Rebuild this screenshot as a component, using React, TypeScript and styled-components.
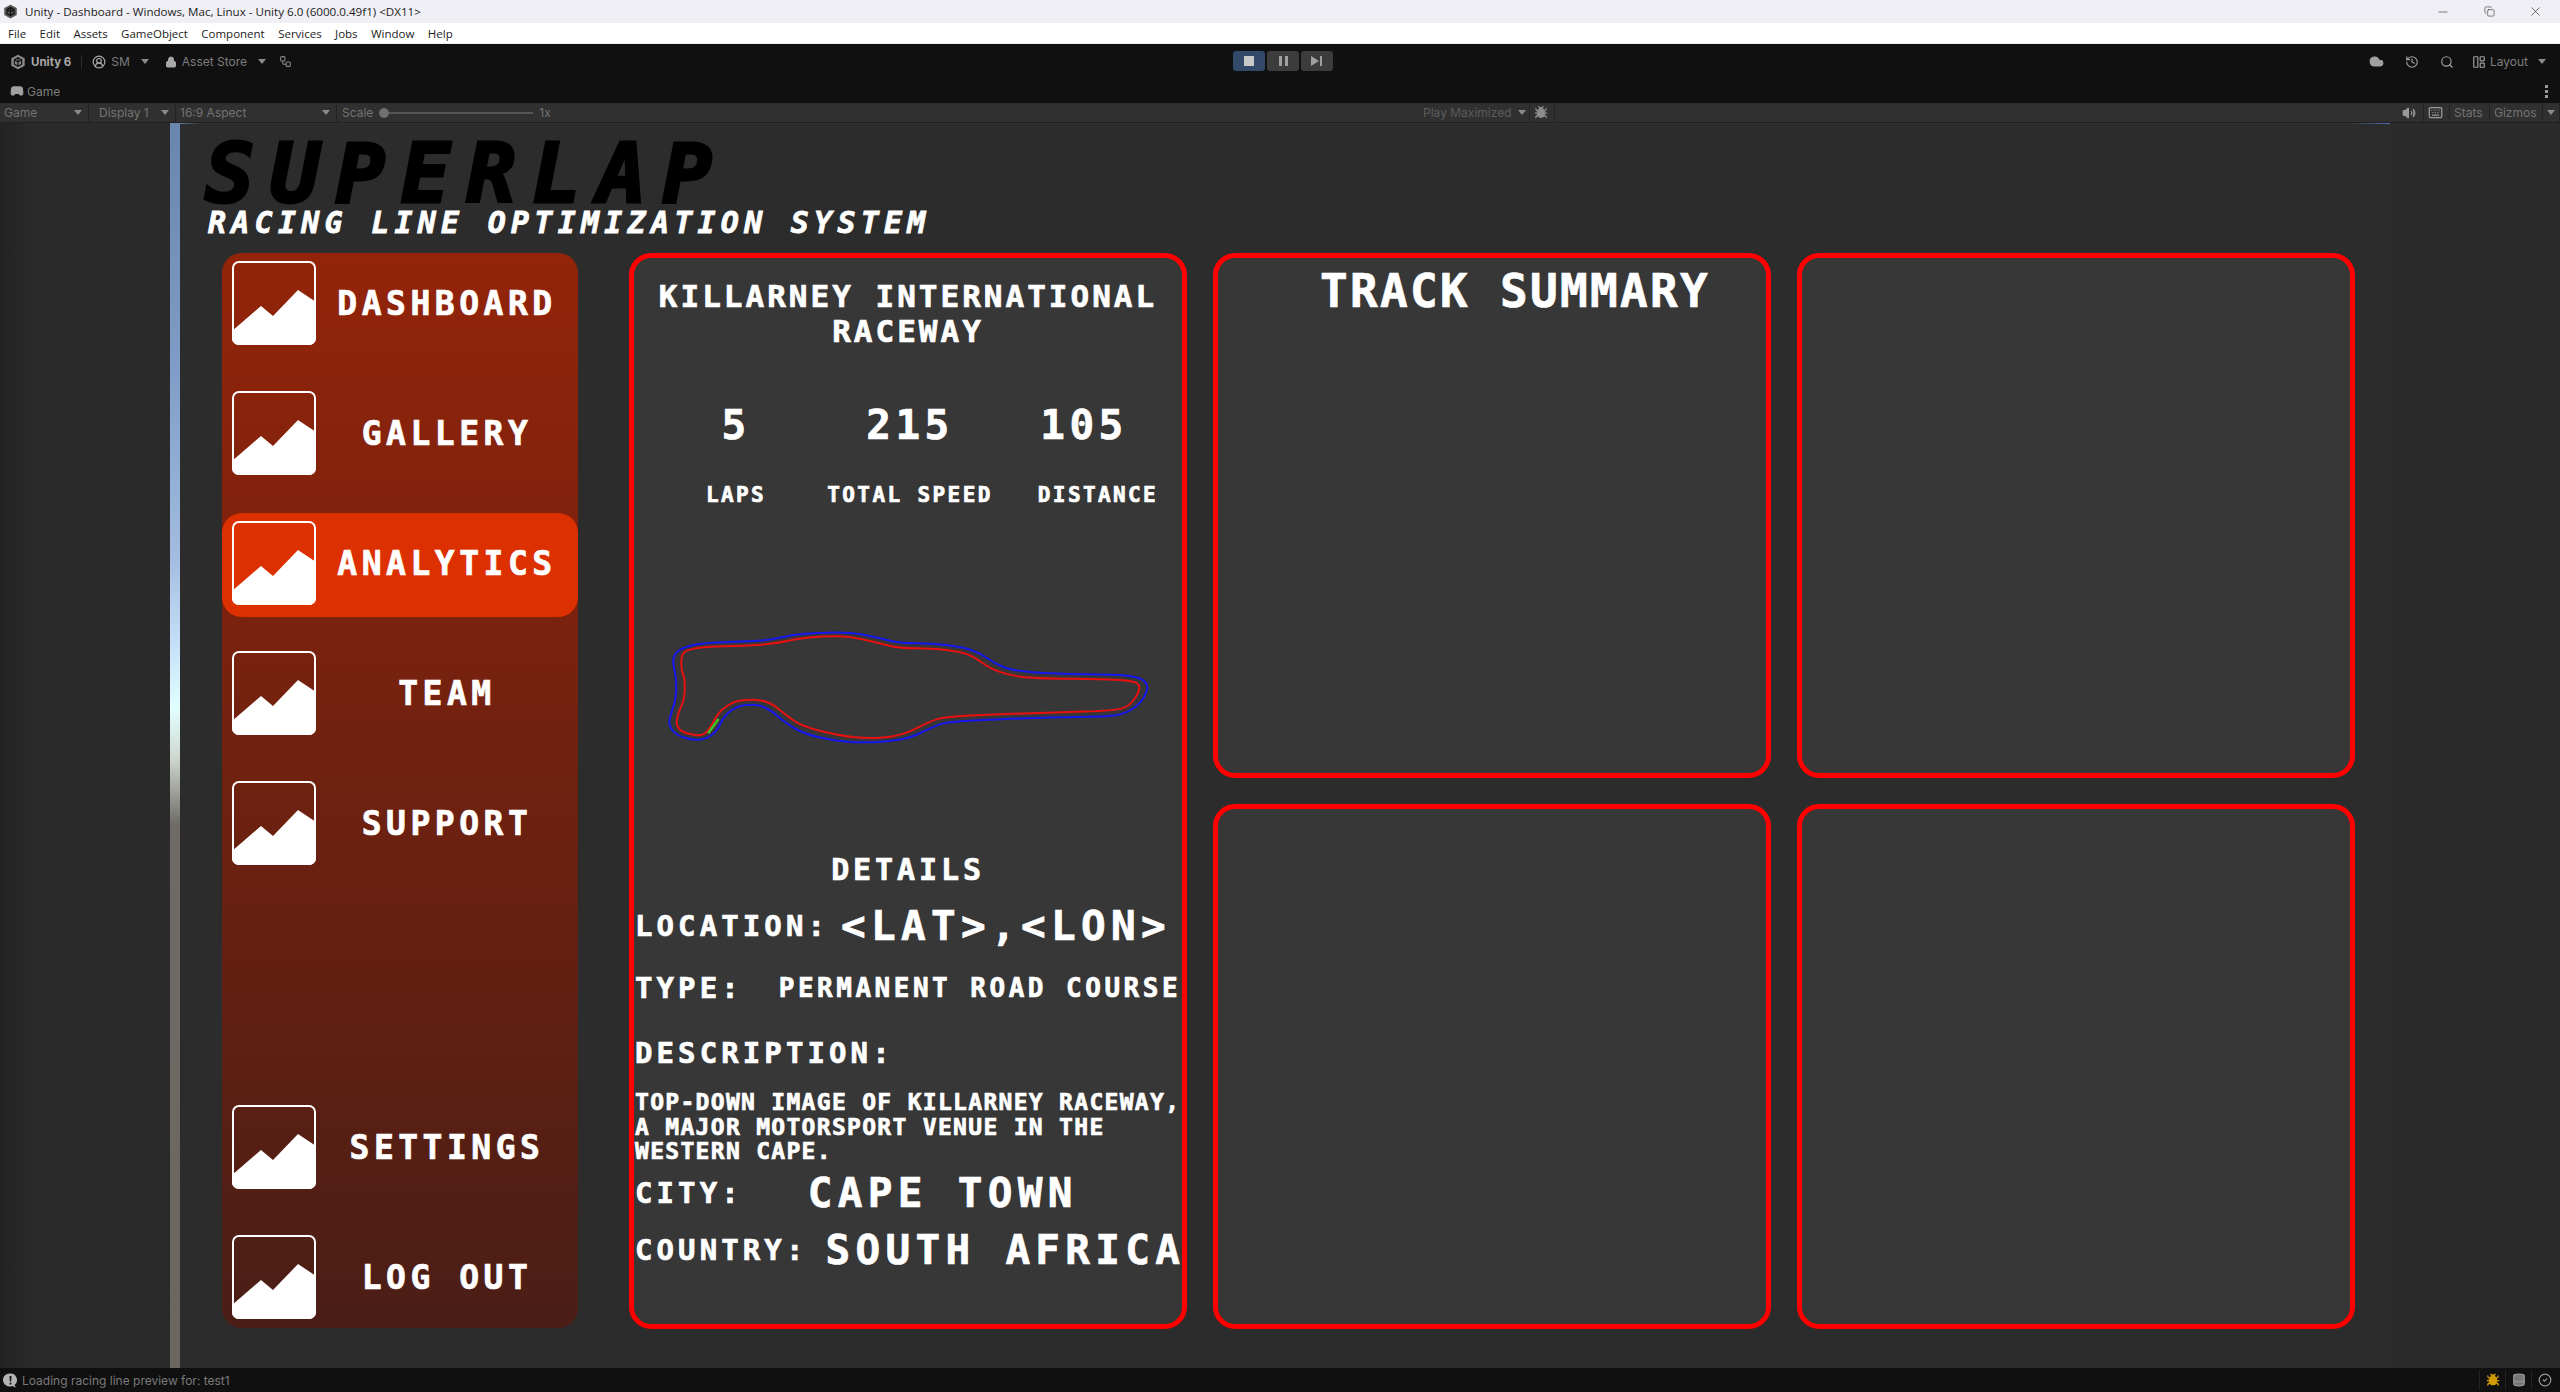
import React from "react";
import styled, { createGlobalStyle } from "styled-components";
import { Bug, CircleCheck, Cloud, Database, Gamepad2, History, Keyboard, LayoutPanelLeft, Lock, Search, UserCircle2, Volume2, Workflow, Minus, Copy, X } from "lucide-react";

const Global = createGlobalStyle`
  html, body { margin: 0; padding: 0; height: 100%; background: #2b2b2b; overflow: hidden; }
  #root { height: 100%; }
  * { box-sizing: border-box; }
`;

const Shell = styled.div`
  width: 2560px;
  height: 1392px;
  display: flex;
  flex-direction: column;
  font-family: Inter, "Liberation Sans", sans-serif;
  font-size: 12px;
  color: #7d7d7d;
`;

const TitleBar = styled.div`
  height: 23px;
  background: #f0eff5;
  display: flex;
  align-items: center;
  padding: 0 2px 0 3px;
  gap: 7px;
  color: #1c1c1c;
  font-family: "Open Sans", sans-serif;
  font-size: 11.6px;
`;
const TitleText = styled.span`flex: 1; white-space: nowrap;`;
const WindowButtons = styled.div`
  display: flex;
  width: 138px;
  height: 23px;
  align-items: center;
  color: #222;
`;
const WindowButton = styled.span`
  width: 46px;
  display: flex;
  justify-content: center;
`;
const MenuBar = styled.div`
  height: 20px;
  background: #fff;
  display: flex;
  align-items: center;
  padding-left: 8px;
  gap: 13.4px;
  color: #1c1c1c;
  font-family: "Open Sans", sans-serif;
  font-size: 11.5px;
`;

const TopZone = styled.div`
  height: 60px;
  background: #101010;
  display: flex;
  flex-direction: column;
  border-top: 1px solid #eee;
`;
const TopRow = styled.div`
  height: 35px;
  display: flex;
  align-items: center;
  position: relative;
  padding: 0 14px 0 10px;
`;
const TopGroup = styled.div<{ $gap?: number; $left?: number }>`
  display: flex;
  align-items: center;
  gap: ${(p) => p.$gap ?? 5}px;
  margin-left: ${(p) => p.$left ?? 0}px;
`;
const TopSpacer = styled.div`flex: 1;`;
const UnityName = styled.span`
  color: #a8a8a8;
  font-weight: 700;
  font-size: 11.5px;
`;
const Divider = styled.span`
  width: 1px;
  height: 14px;
  background: #2c2c2c;
  margin: 0 5px;
`;
const Gap = styled.span<{ $w: number }>`
  width: ${(p) => p.$w}px;
`;
const Caret = styled.span<{ $left?: number }>`
  width: 0;
  height: 0;
  border-left: 4px solid transparent;
  border-right: 4px solid transparent;
  border-top: 5px solid #8a8a8a;
  margin-left: ${(p) => p.$left ?? 6}px;
`;
const PlayBar = styled.div`
  position: absolute;
  left: 1233px;
  top: 7px;
  display: flex;
  gap: 2px;
`;
const PlayButton = styled.div<{ $on?: boolean }>`
  width: 32px;
  height: 20px;
  border-radius: 3px;
  background: ${(p) => (p.$on ? "#33496a" : "#3c3c3c")};
  display: flex;
  align-items: center;
  justify-content: center;
  gap: 3px;
`;
const StopGlyph = styled.span`width: 10px; height: 10px; background: #c8c8c8;`;
const PauseGlyph = styled.span`width: 3px; height: 10px; background: #a0a0a0;`;
const TabRow = styled.div`
  height: 24px;
  display: flex;
  align-items: center;
  justify-content: space-between;
  padding: 0 12px 0 10px;
`;
const Tab = styled.div`
  display: flex;
  align-items: center;
  gap: 3px;
  color: #7e7e7e;
`;
const Kebab = styled.div`
  display: flex;
  flex-direction: column;
  gap: 2px;
  span { width: 3px; height: 3px; background: #999; }
`;

const GameBar = styled.div`
  height: 20px;
  background: #303030;
  border-bottom: 1px solid #202020;
  display: flex;
  align-items: stretch;
  font-size: 12px;
  color: #737373;
`;
const GameCell = styled.div<{ $w?: number }>`
  ${(p) => (p.$w ? `width: ${p.$w}px;` : "")}
  display: flex;
  align-items: center;
  justify-content: space-between;
  padding: 0 6px 0 4px;
  border-right: 1px solid #232323;
  white-space: nowrap;
`;
const CellLabel = styled.span<{ $dim?: boolean; $left?: number }>`
  margin-left: ${(p) => p.$left ?? 0}px;
  ${(p) => (p.$dim ? "color: #5c5c5c;" : "")}
`;
const ScaleCell = styled.div`
  display: flex;
  align-items: center;
  padding-left: 5px;
  gap: 6px;
  flex: 1;
`;
const ScaleThumb = styled.span`
  width: 10px;
  height: 10px;
  border-radius: 50%;
  background: #707070;
`;
const ScaleTrack = styled.span`
  width: 144px;
  height: 2px;
  margin-left: -6px;
  background: #555;
`;
const GameBarSpacer = styled.div`width: 843px;`;

const Body = styled.div`
  flex: 1;
  min-height: 0;
  display: flex;
  background: #2b2b2b;
`;
const Gutter = styled.div`
  width: 170px;
  background: linear-gradient(90deg, #232323, #2a2a2a 30px);
`;
const Strip = styled.div`
  width: 10px;
  background: linear-gradient(
    180deg,
    #6a85ad 0%,
    #7f9dc8 20%,
    #a3bde0 35%,
    #c6e0f8 42%,
    #e2ffff 47%,
    #cfd8d0 51%,
    #6e6a66 56.4%,
    #6b665e 100%
  );
`;
const GameView = styled.div`
  width: 2210px;
  background: #2c2c2c;
  padding: 15px 0 0 25px;
  border-top: 1px solid;
  border-image: linear-gradient(90deg, #6a85ad 0, #303030 20px, #303030 calc(100% - 40px), #4a78c0 100%) 1;
  display: flex;
  flex-direction: column;
`;
const Brand = styled.h1`
  margin: 0;
  height: 70px;
  font: italic 700 82px/70px "DejaVu Sans Mono", monospace;
  letter-spacing: 16px;
  -webkit-text-stroke: 3px #000;
  color: #000;
  white-space: nowrap;
`;
const Tagline = styled.div`
  height: 44px;
  padding-left: 3px;
  font: italic 700 30px/28px "DejaVu Sans Mono", monospace;
  letter-spacing: 5.25px;
  -webkit-text-stroke: 0.8px #fff;
  color: #fff;
  white-space: nowrap;
`;
const Dash = styled.div`
  display: flex;
  align-items: flex-start;
  padding-left: 17px;
  gap: 51px;
  font-family: "DejaVu Sans Mono", monospace;
  font-weight: 700;
  color: #fff;
  -webkit-text-stroke: 0.7px #fff;
`;
const Sidebar = styled.nav`
  width: 356px;
  height: 1075px;
  border-radius: 20px;
  background: linear-gradient(180deg, #93240a 0%, #4a1e16 100%);
  display: flex;
  flex-direction: column;
  gap: 26px;
  flex-shrink: 0;
`;
const NavItem = styled.div<{ $active?: boolean; $push?: boolean }>`
  height: 104px;
  flex-shrink: 0;
  border-radius: 20px;
  background: ${(p) => (p.$active ? "#dd3000" : "transparent")};
  display: flex;
  align-items: center;
  padding: 0 0 4px 10px;
  ${(p) => (p.$push ? "margin-top: auto;" : "")}
  &:last-child { margin-bottom: -3px; }
`;
const NavLabel = styled.span`
  flex: 1;
  text-align: center;
  font-size: 33px;
  letter-spacing: 4.5px;
  white-space: nowrap;
`;
const IconSvg = styled.svg`
  width: 84px;
  height: 84px;
  flex-shrink: 0;
`;
const Grid = styled.div`
  display: grid;
  grid-template-columns: repeat(3, 558px);
  grid-template-rows: repeat(2, 525px);
  column-gap: 26px;
  row-gap: 26px;
`;
const Panel = styled.section<{ $tall?: boolean }>`
  background: #373737;
  border: 5px solid #f00;
  border-radius: 22px;
  ${(p) => (p.$tall ? "grid-row: span 2;" : "")}
`;
const TrackPanel = styled(Panel)`
  display: flex;
  flex-direction: column;
  padding: 21px 1px 0 1px;
`;
const TrackTitle = styled.h2`
  margin: 0;
  text-align: center;
  font: 700 31px/35px "DejaVu Sans Mono", monospace;
  letter-spacing: 3px;
`;
const Stats = styled.div`
  display: grid;
  grid-template-columns: repeat(3, 174px);
  margin: 52px 0 0 14px;
`;
const Stat = styled.div`
  display: flex;
  flex-direction: column;
  align-items: center;
  gap: 33px;
`;
const StatValue = styled.span`
  font-size: 41px;
  line-height: 48px;
  letter-spacing: 4.4px;
`;
const StatLabel = styled.span<{ $shift?: number }>`
  font-size: 21px;
  line-height: 26px;
  letter-spacing: 2.4px;
  white-space: nowrap;
  margin-left: ${(p) => p.$shift ?? 0}px;
`;
const TrackMap = styled.svg`
  display: block;
  width: 540px;
  height: 140px;
  margin: 112px 0 0 5px;
`;
const DetailsHead = styled.h3`
  margin: 92px 0 0;
  text-align: center;
  font: 700 30px/36px "DejaVu Sans Mono", monospace;
  letter-spacing: 3.9px;
`;
const Row = styled.div<{ $h: number; $gap: number; $top?: number }>`
  height: ${(p) => p.$h}px;
  margin-top: ${(p) => p.$top ?? 0}px;
  display: flex;
  align-items: center;
  gap: ${(p) => p.$gap}px;
  white-space: nowrap;
`;
const Key = styled.span`
  font-size: 29px;
  letter-spacing: 4.1px;
`;
const BigValue = styled.span`
  font-size: 41px;
  letter-spacing: 5.3px;
`;
const MidValue = styled.span`
  font-size: 26px;
  letter-spacing: 3.5px;
`;
const Description = styled.p`
  margin: 19px 0 0;
  font-size: 23px;
  line-height: 24.5px;
  letter-spacing: 1.3px;
  white-space: nowrap;
`;
const SummaryTitle = styled.h2`
  margin: 0;
  padding: 5px 0 0 46px;
  text-align: center;
  font: 700 46px/56px "DejaVu Sans Mono", monospace;
  letter-spacing: 2.3px;
`;

const StatusBar = styled.div`
  height: 24px;
  background: #101010;
  display: flex;
  align-items: center;
  padding: 0 3px 0 3px;
  gap: 4px;
  color: #7a7a7a;
`;
const StatusText = styled.span`flex: 1;`;
const StatusCell = styled.div`
  width: 26px;
  height: 20px;
  border-left: 1px solid #232323;
  display: flex;
  align-items: center;
  justify-content: center;
`;
const StatusCells = styled.div`display: flex;`;

const menu = ["File", "Edit", "Assets", "GameObject", "Component", "Services", "Jobs", "Window", "Help"];

const smooth = (pts: number[][]) => {
  const mid = (a: number[], b: number[]) => [(a[0] + b[0]) / 2, (a[1] + b[1]) / 2];
  const start = mid(pts[pts.length - 1], pts[0]);
  let d = `M${start[0]} ${start[1]}`;
  pts.forEach((p, i) => {
    const m = mid(p, pts[(i + 1) % pts.length]);
    d += ` Q${p[0]} ${p[1]} ${m[0]} ${m[1]}`;
  });
  return d + "Z";
};

const outer = [[100,100],[130,80],[190,68],[300,65],[380,60],[440,45],[520,38],[610,37],[680,50],[755,70],[850,70],[930,80],[980,95],[1030,130],[1080,152],[1200,162],[1380,163],[1440,170],[1470,185],[1475,210],[1450,255],[1400,285],[1340,290],[1200,292],[900,303],[850,320],[790,352],[720,365],[640,368],[560,362],[480,342],[430,315],[365,258],[310,252],[270,265],[240,295],[222,335],[190,358],[150,360],[105,345],[82,315],[90,280],[105,235],[105,170],[95,130]];
const inner = [[120,105],[135,90],[190,80],[300,78],[400,70],[460,55],[540,48],[610,50],[680,65],[750,85],[850,85],[930,95],[970,110],[1015,145],[1070,165],[1140,175],[1380,178],[1440,185],[1452,200],[1445,225],[1420,258],[1380,272],[1200,277],[890,288],[840,305],[770,342],[700,355],[600,352],[480,322],[435,295],[372,240],[290,238],[250,258],[225,282],[195,340],[165,348],[120,335],[105,315],[110,280],[130,235],[130,175],[120,150]];

const UnityLogo = ({ size, color }: { size: number; color: string }) => (
  <svg width={size} height={size} viewBox="0 0 24 24" fill="none">
    <path d="M12 1 22 6.5v11L12 23 2 17.5v-11z" fill={color} />
    <path d="M12 5.5 17.5 8.7v6.6L12 18.5l-5.5-3.2V8.7z M12 5.5V12m0 0 5.5-3.3M12 12 6.5 8.7M12 12v6.5" stroke="#101010" strokeWidth="1.8" />
  </svg>
);

const ImageIcon = () => (
  <IconSvg viewBox="0 0 84 84">
    <rect x="1" y="1" width="82" height="82" rx="6" fill="none" stroke="#fff" strokeWidth="2" />
    <path d="M0 70 29 45 41 55 66 29 84 41V77a7 7 0 0 1-7 7H7a7 7 0 0 1-7-7z" fill="#fff" />
  </IconSvg>
);

const ConsoleIcon = () => (
  <svg width="15" height="15" viewBox="0 0 15 15">
    <path d="M7.5 0.5a6.5 6.5 0 0 1 4 11.6L13 14.5l-4-1.6a6.5 6.5 0 1 1-1.5-12.4z" fill="#b4b4b4" />
    <path d="M6.5 3h2l-.3 5.5H6.8zM6.6 9.7h1.8v1.8H6.6z" fill="#101010" />
  </svg>
);

const nav = [
  { label: "DASHBOARD" },
  { label: "GALLERY" },
  { label: "ANALYTICS", active: true },
  { label: "TEAM" },
  { label: "SUPPORT" },
  { label: "SETTINGS", push: true },
  { label: "LOG OUT" },
];

export default function App() {
  return (
    <Shell>
      <Global />
      <TitleBar>
        <UnityLogo size={15} color="#555" />
        <TitleText>Unity - Dashboard - Windows, Mac, Linux - Unity 6.0 (6000.0.49f1) &lt;DX11&gt;</TitleText>
        <WindowButtons>
          <WindowButton><Minus size={14} strokeWidth={1} /></WindowButton>
          <WindowButton><Copy size={11} strokeWidth={1.2} /></WindowButton>
          <WindowButton><X size={15} strokeWidth={1} /></WindowButton>
        </WindowButtons>
      </TitleBar>
      <MenuBar>
        {menu.map((m) => <span key={m}>{m}</span>)}
      </MenuBar>
      <TopZone>
        <TopRow>
          <TopGroup>
            <UnityLogo size={16} color="#8a8a8a" />
            <UnityName>Unity 6</UnityName>
            <Divider />
            <UserCircle2 size={14} color="#a8a8a8" />
            <span>SM</span>
            <Caret />
            <Gap $w={6} />
            <Lock size={12} color="#a8a8a8" fill="#a8a8a8" />
            <span>Asset Store</span>
            <Caret />
            <Gap $w={3} />
            <Workflow size={13} color="#888" />
          </TopGroup>
          <TopSpacer />
          <PlayBar>
            <PlayButton $on><StopGlyph /></PlayButton>
            <PlayButton><PauseGlyph /><PauseGlyph /></PlayButton>
            <PlayButton>
              <svg width="12" height="10" viewBox="0 0 12 10"><path d="M0 0 8 5 0 10zM9 0h2v10H9z" fill="#a0a0a0" /></svg>
            </PlayButton>
          </PlayBar>
          <TopGroup $gap={21}>
            <Cloud size={15} color="#a0a0a0" fill="#a0a0a0" />
            <History size={14} color="#a0a0a0" />
            <Search size={14} color="#a0a0a0" />
            <TopGroup $gap={4} $left={-3}>
              <LayoutPanelLeft size={14} color="#a0a0a0" />
              <span>Layout</span>
              <Caret />
            </TopGroup>
          </TopGroup>
        </TopRow>
        <TabRow>
          <Tab>
            <Gamepad2 size={14} color="#a0a0a0" fill="#a0a0a0" />
            <span>Game</span>
          </Tab>
          <Kebab><span /><span /><span /></Kebab>
        </TabRow>
      </TopZone>
      <GameBar>
        <GameCell $w={89}>Game<Caret /></GameCell>
        <GameCell $w={87}><CellLabel $left={6}>Display 1</CellLabel><Caret /></GameCell>
        <GameCell $w={161}><CellLabel>16:9 Aspect</CellLabel><Caret /></GameCell>
        <ScaleCell>
          <span>Scale</span>
          <ScaleThumb />
          <ScaleTrack />
          <span>1x</span>
        </ScaleCell>
        <GameCell $w={110}><CellLabel $dim $left={-1}>Play Maximized</CellLabel><Caret /></GameCell>
        <GameCell $w={25}><Bug size={15} color="#8c8c8c" fill="#8c8c8c" /></GameCell>
        <GameBarSpacer />
        <GameCell $w={26}><Volume2 size={14} color="#9a9a9a" fill="#9a9a9a" /></GameCell>
        <GameCell $w={26}><Keyboard size={15} color="#9a9a9a" /></GameCell>
        <GameCell $w={40}>Stats</GameCell>
        <GameCell $w={53}>Gizmos</GameCell>
        <GameCell $w={17}><Caret $left={0} /></GameCell>
      </GameBar>
      <Body>
        <Gutter />
        <Strip />
        <GameView>
          <Brand>SUPERLAP</Brand>
          <Tagline>RACING LINE OPTIMIZATION SYSTEM</Tagline>
          <Dash>
            <Sidebar>
              {nav.map((n) => (
                <NavItem key={n.label} $active={n.active} $push={n.push}>
                  <ImageIcon />
                  <NavLabel>{n.label}</NavLabel>
                </NavItem>
              ))}
            </Sidebar>
            <Grid>
              <TrackPanel $tall>
                <TrackTitle>KILLARNEY INTERNATIONAL<br />RACEWAY</TrackTitle>
                <Stats>
                  <Stat><StatValue>5</StatValue><StatLabel>LAPS</StatLabel></Stat>
                  <Stat><StatValue>215</StatValue><StatLabel>TOTAL SPEED</StatLabel></Stat>
                  <Stat><StatValue>105</StatValue><StatLabel $shift={28}>DISTANCE</StatLabel></Stat>
                </Stats>
                <TrackMap viewBox="0 0 1568 420" preserveAspectRatio="none" fill="none" strokeLinejoin="round">
                  <path d={smooth(outer)} stroke="#1616f0" strokeWidth="2" vectorEffect="non-scaling-stroke" />
                  <path d={smooth(inner)} stroke="#e81010" strokeWidth="2" vectorEffect="non-scaling-stroke" />
                  <path d="M198 340 228 297" stroke="#44c22c" strokeWidth="2.5" vectorEffect="non-scaling-stroke" />
                </TrackMap>
                <DetailsHead>DETAILS</DetailsHead>
                <Row $h={46} $gap={12} $top={15}><Key>LOCATION:</Key><BigValue>&lt;LAT&gt;,&lt;LON&gt;</BigValue></Row>
                <Row $h={36} $gap={36} $top={21}><Key>TYPE:</Key><MidValue>PERMANENT ROAD COURSE</MidValue></Row>
                <Row $h={36} $gap={0} $top={29}><Key>DESCRIPTION:</Key></Row>
                <Description>
                  TOP-DOWN IMAGE OF KILLARNEY RACEWAY,<br />
                  A MAJOR MOTORSPORT VENUE IN THE<br />
                  WESTERN CAPE.
                </Description>
                <Row $h={46} $gap={65} $top={6}><Key>CITY:</Key><BigValue>CAPE TOWN</BigValue></Row>
                <Row $h={46} $gap={18} $top={11}><Key>COUNTRY:</Key><BigValue>SOUTH AFRICA</BigValue></Row>
              </TrackPanel>
              <Panel><SummaryTitle>TRACK SUMMARY</SummaryTitle></Panel>
              <Panel />
              <Panel />
              <Panel />
            </Grid>
          </Dash>
        </GameView>
      </Body>
      <StatusBar>
        <ConsoleIcon />
        <StatusText>Loading racing line preview for: test1</StatusText>
        <StatusCells>
          <StatusCell><Bug size={14} color="#d09a00" fill="#d09a00" /></StatusCell>
          <StatusCell><Database size={14} color="#999" fill="#777" /></StatusCell>
          <StatusCell><CircleCheck size={14} color="#999" /></StatusCell>
        </StatusCells>
      </StatusBar>
    </Shell>
  );
}
